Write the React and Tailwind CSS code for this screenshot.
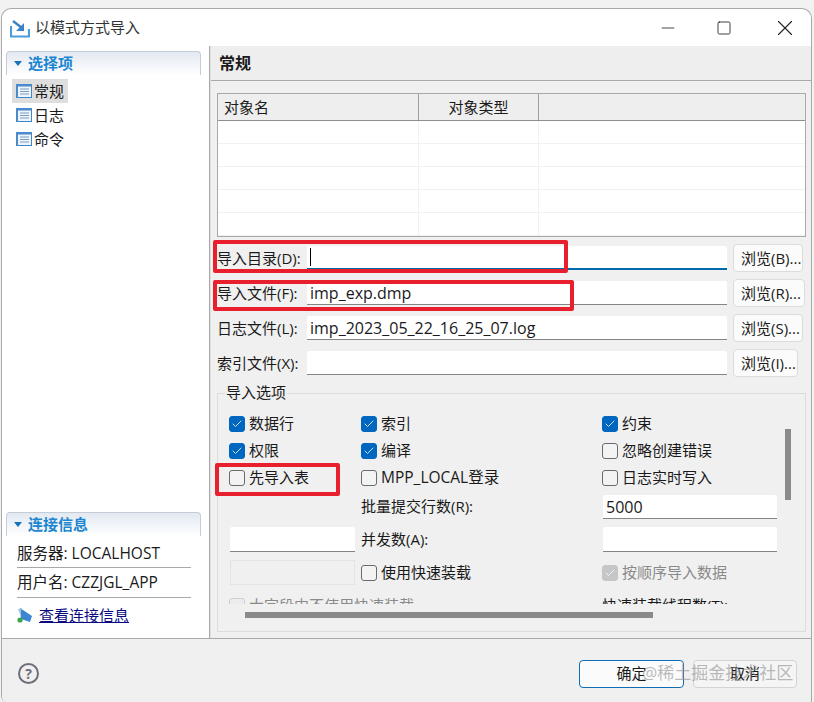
import { Check, Minus, Square, X } from 'lucide-react'

const Title = ({ children }) => (
  <div className="h-6 flex items-center gap-[6px] pl-[7px] rounded-t-[4px] border-t border-x border-[#c5ccd6] bg-gradient-to-b from-[#e3e9f2] to-white text-[15px] font-bold text-[#1c86d1]">
    <span className="w-0 h-0 border-x-[4px] border-x-transparent border-t-[5px] border-t-[#1673b8]" />
    {children}
  </div>
)

const NavIcon = () => (
  <svg width="16" height="14" viewBox="0 0 16 14" className="shrink-0">
    <rect x="0.5" y="0.5" width="15" height="13" fill="#eef4fb" stroke="#3f86c8" />
    <rect x="0" y="0" width="16" height="2.5" fill="#4a8ccb" />
    <rect x="0" y="0" width="2" height="14" fill="#4a8ccb" />
    <path d="M4 5h9M4 7.5h9M4 10h9" stroke="#7d9cc0" />
  </svg>
)

const Box = ({ checked, disabled }) => (
  <span
    className={`w-4 h-4 shrink-0 rounded-[3px] flex items-center justify-center border ${
      disabled
        ? 'bg-[#c6c6c6] border-[#c6c6c6]'
        : checked
          ? 'bg-[#0067c0] border-[#0067c0]'
          : 'bg-[#f3f3f3] border-[#6b6b6b]'
    }`}
  >
    {checked && <Check size={12} strokeWidth={1.6} className="text-white" />}
  </span>
)

const Option = ({ label, checked, disabled }) => (
  <div className={`flex items-center gap-1 whitespace-nowrap ${disabled ? 'text-[#8a8a8a]' : ''}`}>
    <Box checked={checked} disabled={disabled} />
    <span>{label}</span>
  </div>
)

const Field = ({ label, value, button, width, focused, caret }) => (
  <div className="h-[35px] flex items-center">
    <span className="w-[96px] pl-[6px] whitespace-nowrap">{label}</span>
    <div
      className={`w-[420px] h-6 bg-white pl-[3px] flex items-center rounded-t-[2px] text-base ${
        focused ? 'border-b-2 border-b-[#0067a8]' : 'border-b border-b-[#858585]'
      }`}
    >
      {caret && <span className="w-px h-[18px] bg-black" />}
      {value}
    </div>
    <button className={`ml-[6px] h-7 ${width} pl-[7px] bg-[#fbfbfb] border border-[#dcdcdc] rounded-[4px] text-left whitespace-nowrap`}>
      {button}
    </button>
  </div>
)

const Plain = ({ className = '', children }) => (
  <div className={`h-6 bg-white border-b border-[#858585] rounded-t-[2px] flex items-center pl-[3px] text-base ${className}`}>
    {children}
  </div>
)

const Red = ({ className }) => (
  <div className={`absolute border-[4px] border-[#e8202e] rounded-[2px] pointer-events-none ${className}`} />
)

export default function App() {
  return (
    <div
      className="relative w-[814px] h-[702px] bg-[#f2f2f2] pt-2 pl-px pr-[2px] overflow-hidden text-[15px] leading-none text-[#1a1a1a]"
      style={{ fontFamily: '"Open Sans", "Noto Sans CJK SC", sans-serif' }}
    >
      <div className="h-[694px] flex flex-col bg-white rounded-t-[10px] rounded-bl-[6px] border-t border-r border-l border-[#a9a9a9] overflow-hidden">
        {/* title bar */}
        <div className="h-[37px] shrink-0 flex items-center pl-[8px] text-[15px] text-[#333]">
          <svg width="20" height="18" viewBox="0 0 20 18" className="mr-[5px] mt-[2px]">
            <path d="M1 6v10.5h18V9" fill="none" stroke="#4a9bd8" strokeWidth="2.2" />
            <path d="M3 1l9 7" stroke="#3b83c4" strokeWidth="2.4" />
            <path d="M14 3v8H6z" fill="#3b83c4" />
          </svg>
          <span className="-mt-px">以模式方式导入</span>
          <div className="ml-auto flex items-center text-[#222]">
            <Minus size={20} strokeWidth={1} className="mr-[38px]" />
            <Square size={16} strokeWidth={1.3} className="mr-[40px]" />
            <X size={26} strokeWidth={1} className="mr-[13px]" />
          </div>
        </div>

        <div className="h-[593px] shrink-0 flex border-b border-[#a9a9a9]">
          {/* left panel */}
          <div className="w-[208px] shrink-0 flex flex-col pt-[5px] pl-[4px] pr-[8px] pb-[5px] border-r border-[#a9a9a9]">
            <Title>选择项</Title>
            <div className="mt-[4px] pl-[6px]">
              {['常规', '日志', '命令'].map((name, i) => (
                <div key={name} className={`w-14 h-6 flex items-center gap-[2px] pl-1 ${i === 0 ? 'bg-[#dedede]' : ''}`}>
                  <NavIcon />
                  {name}
                </div>
              ))}
            </div>
            <div className="mt-auto">
              <Title>连接信息</Title>
              <div className="pl-[11px] pr-[10px] text-[15.5px]">
                <div className="h-8 pt-[5px] flex items-center border-b border-[#a9a9a9]">服务器: LOCALHOST</div>
                <div className="h-[30px] pt-px flex items-center border-b border-[#a9a9a9]">用户名: CZZJGL_APP</div>
                <div className="h-[35px] flex items-center gap-[6px] text-[15px]">
                  <svg width="16" height="18" viewBox="0 0 16 18" className="shrink-0">
                    <path d="M3 1l12 8-2 6-9-3z" fill="#3d86d2" />
                    <path d="M1 2l4-1-2 6z" fill="#9fc4e6" />
                    <circle cx="3" cy="13" r="2.6" fill="#3aa84a" />
                  </svg>
                  <a className="text-[#0a0a80] underline">查看连接信息</a>
                </div>
              </div>
            </div>
          </div>

          {/* right panel */}
          <div className="flex-1 bg-[#f0f0f0] border-l border-[#e0e0e0]">
            <div className="h-[35px] flex items-center pl-2 bg-[#eeeeee] border-b border-[#a9a9a9] text-base font-bold">常规</div>
            <div className="px-[6px]">
              <div className="mt-3 w-[589px] h-[144px] border border-[#a9a9a9] bg-white">
                <div className="h-[27px] flex bg-[#eeeeee] border-b border-[#8f8f8f]">
                  <div className="w-[201px] pl-[6px] flex items-center border-r border-[#a0a0a0]">对象名</div>
                  <div className="w-[120px] flex items-center justify-center border-r border-[#a0a0a0]">对象类型</div>
                </div>
                {[0, 1, 2, 3, 4].map((r) => (
                  <div key={r} className="h-[23px] flex border-b border-[#f1f1f1]">
                    <div className="w-[201px] border-r border-[#f1f1f1]" />
                    <div className="w-[120px] border-r border-[#f1f1f1]" />
                  </div>
                ))}
              </div>

              <div className="mt-[3.5px] w-[595px] -ml-[6px]">
                <Field label="导入目录(D):" focused caret button="浏览(B)..." width="w-[70px]" />
                <Field label="导入文件(F):" value="imp_exp.dmp" button="浏览(R)..." width="w-[72px]" />
                <Field label="日志文件(L):" value="imp_2023_05_22_16_25_07.log" button="浏览(S)..." width="w-[70px]" />
                <Field label="索引文件(X):" button="浏览(I)..." width="w-[65px]" />
              </div>

              {/* options group */}
              <div className="relative mt-[12.5px] w-[589px] h-[239px] border border-[#dcdcdc]">
                <span className="absolute -top-[9px] left-[7px] px-px bg-[#f0f0f0]">导入选项</span>
                <div className="ml-[4px] mt-[16px] w-[556px] h-[194px] overflow-hidden pl-[7px]">
                  <div className="grid grid-cols-[132px_241px_175px] grid-rows-[27px_27px_27px_31px_35px_31px_35px] items-center">
                    <Option label="数据行" checked />
                    <Option label="索引" checked />
                    <Option label="约束" checked />
                    <Option label="权限" checked />
                    <Option label="编译" checked />
                    <Option label="忽略创建错误" />
                    <Option label="先导入表" />
                    <Option label={<span className="text-[15.5px]">MPP_LOCAL登录</span>} />
                    <Option label="日志实时写入" />
                    <span />
                    <span>批量提交行数(R):</span>
                    <Plain className="ml-px mt-px">5000</Plain>
                    <Plain className="ml-px w-[125px] h-[25px]" />
                    <span>并发数(A):</span>
                    <Plain className="ml-px h-[25px]" />
                    <div className="ml-px w-[125px] h-[25px] border border-[#e4e4e4]" />
                    <Option label="使用快速装载" />
                    <Option label="按顺序导入数据" checked disabled />
                    <div className="col-span-2 flex items-center gap-1 whitespace-nowrap text-[#8a8a8a]">
                      <span className="w-4 h-4 shrink-0 rounded-[3px] border border-[#cfcfcf] bg-[#ececec]" />
                      <span>大字段中不使用快速装载</span>
                    </div>
                    <span className="whitespace-nowrap">快速装载线程数(T):</span>
                  </div>
                </div>
                {/* scrollbars */}
                <div className="absolute left-[567px] top-[35px] w-[6px] h-[71px] bg-[#8a8a8a]" />
                <div className="absolute left-[27px] top-[218px] w-[408px] h-[6px] bg-[#8a8a8a]" />
              </div>
            </div>
          </div>
        </div>

        {/* footer */}
        <div className="relative flex-1 bg-[#f0f0f0] flex items-center pl-[16px] pt-[6px]">
          <span className="w-[21px] h-[21px] rounded-full border-2 border-[#6e6e7a] flex items-center justify-center text-sm font-bold text-[#6e6e7a]">?</span>
          <div className="ml-auto mr-[14px] flex gap-[9px]">
            <button className="w-[105px] h-7 bg-[#fbfbfb] border border-[#0f6cb5] rounded-[4px]">确定</button>
            <button className="w-[104px] h-7 bg-[#f5f5f5] border border-[#d4d4d4] rounded-[4px]">取消</button>
          </div>
        </div>
      </div>

      {/* annotations */}
      <Red className="left-[213px] top-[240px] w-[355px] h-[33px]" />
      <Red className="left-[213px] top-[280px] w-[361px] h-[31px]" />
      <Red className="left-[215px] top-[463px] w-[125px] h-[33px]" />
      <span className="absolute left-[642px] top-[664px] text-[17px] text-[#8c8c8c]/60 whitespace-nowrap">@稀土掘金技术社区</span>
    </div>
  )
}
